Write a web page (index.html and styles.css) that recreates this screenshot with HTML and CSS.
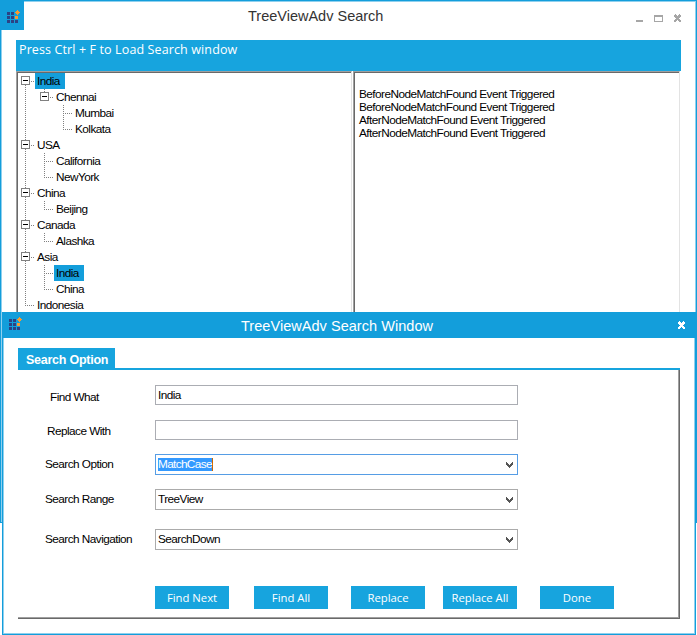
FILE: index.html
```html
<!DOCTYPE html>
<html lang="en">
<head>
<meta charset="utf-8">
<title>TreeViewAdv Search</title>
<link rel="stylesheet" href="styles.css">
</head>
<body>
<svg class="defs" width="0" height="0" aria-hidden="true">
  <symbol id="logo" viewBox="0 0 13 13" shape-rendering="crispEdges">
    <path fill="#2c4284" d="M0 2h3v3H0zM4 2h3v3H4zM0 6h3v3H0zM4 6h3v3H4zM0 10h3v3H0zM4 10h3v3H4zM8 10h3v3H8z"/>
    <path fill="#f79a30" d="M8 6h3v3H8zM10 0h1v1h1v1h1v1h-1v1h-1v1h-1V4H9V3H8V2h1V1h1z"/>
  </symbol>
  <symbol id="close" viewBox="0 0 7 8" shape-rendering="crispEdges">
    <path fill="currentColor" d="M1 0h1v1h1v1h1V1h1V0h1v1h1v2H6v1H5v1h1v1h1v2H5V7H4V6H3v1H2v1H0V6h1V5h1V4H1V3H0V1h1z"/>
  </symbol>
  <symbol id="chevron" viewBox="0 0 7 6" shape-rendering="crispEdges">
    <path fill="#555" d="M0 0h1v1h1v1h1v1h1V2h1V1h1V0h1v3H6v1H5v1H4v1H3V5H2V4H1V3H0z"/>
  </symbol>
</svg>

<main class="window">
  <header class="titlebar">
    <div class="app"><svg class="logo"><use href="#logo"/></svg></div>
    <h1>TreeViewAdv Search</h1>
    <div class="controls">
      <i class="min"></i><i class="max"></i><svg class="x"><use href="#close"/></svg>
    </div>
  </header>
  <div class="banner"><span>Press Ctrl + F to Load Search window</span></div>
  <div class="panes">
    <ul class="tree">
      <li><i class="c box first"></i><span class="hit">India</span></li>
      <li><i class="c v"></i><i class="c box only"></i><span>Chennai</span></li>
      <li><i class="c v"></i><i class="c"></i><i class="c v h"></i><span>Mumbai</span></li>
      <li><i class="c v"></i><i class="c"></i><i class="c end h"></i><span>Kolkata</span></li>
      <li><i class="c v box"></i><span>USA</span></li>
      <li><i class="c v"></i><i class="c v h"></i><span>California</span></li>
      <li><i class="c v"></i><i class="c end h"></i><span>NewYork</span></li>
      <li><i class="c v box"></i><span>China</span></li>
      <li><i class="c v"></i><i class="c end h"></i><span>Beijing</span></li>
      <li><i class="c v box"></i><span>Canada</span></li>
      <li><i class="c v"></i><i class="c end h"></i><span>Alashka</span></li>
      <li><i class="c v box"></i><span>Asia</span></li>
      <li><i class="c v"></i><i class="c v h"></i><span class="hit">India</span></li>
      <li><i class="c v"></i><i class="c end h"></i><span>China</span></li>
      <li><i class="c end h"></i><span>Indonesia</span></li>
    </ul>
    <div class="log">
      <p>BeforeNodeMatchFound Event Triggered</p>
      <p>BeforeNodeMatchFound Event Triggered</p>
      <p>AfterNodeMatchFound Event Triggered</p>
      <p>AfterNodeMatchFound Event Triggered</p>
    </div>
  </div>
</main>

<section class="dialog">
  <header class="dialog-title">
    <svg class="logo"><use href="#logo"/></svg>
    <h2>TreeViewAdv Search Window</h2>
    <svg class="x"><use href="#close"/></svg>
  </header>
  <div class="dialog-body">
    <div class="tabs"><b class="tab">Search Option</b></div>
    <div class="page">
      <div class="row find"><label>Find What</label><div class="field">India</div></div>
      <div class="row replace"><label>Replace With</label><div class="field"></div></div>
      <div class="row option"><label>Search Option</label><div class="field combo focus"><mark>MatchCase</mark><svg class="chev"><use href="#chevron"/></svg></div></div>
      <div class="row range"><label>Search Range</label><div class="field combo"><span>TreeView</span><svg class="chev"><use href="#chevron"/></svg></div></div>
      <div class="row nav"><label>Search Navigation</label><div class="field combo"><span>SearchDown</span><svg class="chev"><use href="#chevron"/></svg></div></div>
      <div class="buttons">
        <button>Find Next</button><button>Find All</button><button>Replace</button><button>Replace All</button><button>Done</button>
      </div>
    </div>
  </div>
</section>
</body>
</html>
```
FILE: styles.css
```css
*, *::before, *::after { box-sizing: border-box; }
body {
  margin: 0;
  width: 697px;
  height: 635px;
  position: relative;
  overflow: hidden;
  background: #fff;
  color: #000;
  font: 11.8px/16px "Liberation Sans", Arial, sans-serif;
  letter-spacing: -0.55px;
}
.defs { position: absolute; }
h1, h2, p, ul { margin: 0; padding: 0; font-weight: normal; }

.window {
  width: 697px;
  height: 523px;
  border: 1px solid #139edb;
  box-shadow: inset 0 0 0 1px #8fd0ee;
}
.titlebar { display: flex; height: 39px; }
.app {
  width: 24px;
  height: 30px;
  margin: -1px 0 0 -1px;
  padding: 10px 0 0 7px;
  background: #139edb;
}
.logo { display: block; width: 13px; height: 13px; }
.titlebar h1 {
  flex: 1;
  padding: 5px 0 0 224px;
  font-size: 14.5px;
  line-height: 20px;
  letter-spacing: 0;
  color: #333;
}
.controls { display: flex; width: 61px; padding-top: 13px; color: #a6a6a6; }
.min { width: 7px; height: 2px; margin: 6px 11px 0 1px; background: #a6a6a6; }
.max { width: 9px; height: 7px; margin: 1px 11px 0 0; border: 1px solid #a6a6a6; border-top-width: 2px; }
.x { display: block; width: 7px; height: 8px; }

.banner {
  width: 665px;
  height: 31px;
  margin-left: 15px;
  padding: 1px 0 0 3px;
  background: #17a4de;
  color: #fff;
  font: 12.5px/17px "Open Sans", sans-serif;
  letter-spacing: 0.12px;
}
.panes { display: flex; width: 665px; height: 440px; margin-left: 15px; }
.tree, .log {
  border-style: solid;
  border-width: 1px 1px 0 1px;
  border-color: #a0a0a0 #e3e3e3 #e3e3e3 #a0a0a0;
  box-shadow: inset 1px 1px #696969;
}
.tree { width: 336px; margin-right: 1px; padding: 1px 0 0; list-style: none; }
.tree li { display: flex; height: 16px; margin-left: -1px; }
.tree span { padding: 0 4px 0 2px; white-space: nowrap; }
.tree .hit { width: 30px; background: #139edb; }

.c {
  --dot: #808080 0 1px, transparent 1px 2px;
  position: relative;
  flex: 0 0 19px;
  height: 16px;
}
.v { background: repeating-linear-gradient(var(--dot)) 9px 0 / 1px 16px no-repeat; }
.end { background: repeating-linear-gradient(var(--dot)) 9px 0 / 1px 9px no-repeat; }
.first { background: repeating-linear-gradient(var(--dot)) 9px 12px / 1px 4px no-repeat; }
.only { background: repeating-linear-gradient(var(--dot)) 9px 0 / 1px 3px no-repeat; }
.h::after, .box::after {
  content: "";
  position: absolute;
  left: 9px;
  top: 8px;
  width: 9px;
  height: 1px;
  background: repeating-linear-gradient(90deg, var(--dot));
}
.box::after { left: 15px; width: 4px; }
.box::before {
  content: "";
  position: absolute;
  left: 5px;
  top: 3px;
  width: 9px;
  height: 9px;
  border: 1px solid #808080;
  background: linear-gradient(#000, #000) 1px 3px / 5px 1px no-repeat #fff;
}
.log { width: 327px; padding: 16px 0 0 5px; line-height: 13px; }

.dialog {
  position: absolute;
  left: 2px;
  top: 312px;
  width: 694px;
  height: 323px;
  background: #fff;
  border: 1px solid #139edb;
  box-shadow: inset 0 0 0 1px #8fd0ee;
}
.dialog-title {
  display: flex;
  height: 26px;
  margin: -1px -1px 0;
  padding: 5px 0 0 7px;
  background: #139edb;
  color: #fff;
}
.dialog-title h2 {
  width: 653px;
  padding-left: 219px;
  font-size: 14.5px;
  line-height: 18px;
  letter-spacing: 0.04px;
}
.dialog-title .x { margin: 4px 0 0 3px; }

.dialog-body { padding: 10px 15px 0; }
.tabs { display: flex; width: 662px; height: 22px; border-bottom: 2px solid #17a4de; }
.tab {
  width: 97px;
  height: 22px;
  padding: 0 0 0 8px;
  background: #17a4de;
  color: #fff;
  font-size: 12.5px;
  line-height: 24px;
  letter-spacing: -0.25px;
}
.page {
  width: 662px;
  height: 249px;
  padding-top: 15px;
  border-right: 1px solid #696969;
  border-bottom: 1px solid #696969;
  box-shadow: inset -1px -1px #a0a0a0;
}
.row { display: flex; align-items: center; }
.row label { width: 137px; padding: 0 0 2px 27px; }
.find label { padding: 3px 0 0 32px; }
.replace label { padding: 2px 0 0 29px; }
.find, .replace { height: 20px; }
.option, .range, .nav { height: 21px; }
.field { width: 363px; height: 20px; padding: 0 2px; border: 1px solid #abadb3; line-height: 18px; }
.replace { margin-top: 15px; }
.option { margin-top: 14px; }
.range { margin-top: 14px; }
.nav { margin-top: 19px; }
.combo { display: flex; align-items: center; justify-content: space-between; height: 21px; border-color: #ababab; }
.combo span { padding-bottom: 2px; }
.focus { border-color: #569de5; }
mark { height: 13px; margin-bottom: 1px; background: #3399ff; color: #fff; line-height: 13px; letter-spacing: -0.65px; border-right: 1px solid #cc6600; }
.chev { width: 7px; height: 6px; margin: 1px 2px 0 0; }

.buttons { display: flex; margin: 36px 0 0 137px; }
button {
  width: 74px;
  height: 23px;
  margin: 0 25px 0 0;
  padding: 0;
  border: 0;
  background: #17a4de;
  color: #fff;
  font: 11.3px/23px "Open Sans", sans-serif;
  letter-spacing: 0;
}
button:nth-child(2) { margin-right: 23px; }
button:nth-child(3) { margin-right: 18px; }
button:nth-child(4) { margin-right: 23px; }
```
